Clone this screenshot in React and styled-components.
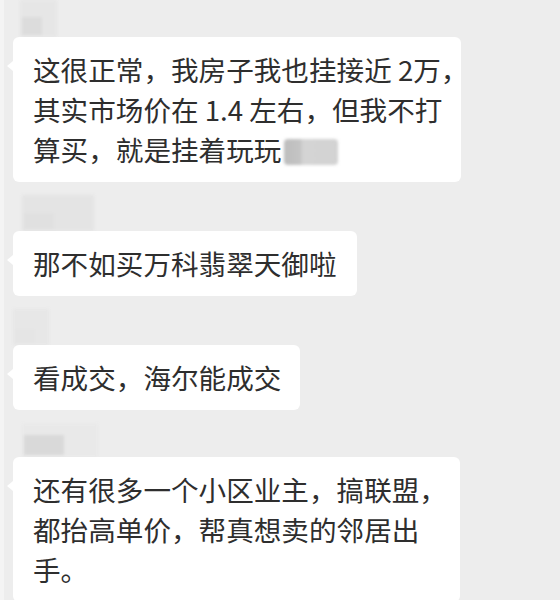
import React from "react";
import styled, { createGlobalStyle } from "styled-components";

const Global = createGlobalStyle`
  html, body { margin: 0; padding: 0; background: #ededed; }
  body { font-family: "Noto Sans CJK SC", "Noto Sans", sans-serif; }
`;

const Page = styled.div`
  width: 560px;
  height: 600px;
  overflow: hidden;
  box-sizing: border-box;
  background: #ededed;
  border-left: 4px solid #f4f4f4;
  padding: 0 0 0 9px;
  display: flex;
  flex-direction: column;
  gap: 12px;
`;

const Message = styled.div`
  display: flex;
  flex-direction: column;
  align-items: flex-start;
`;

const NameRow = styled.div`
  height: ${(p) => p.$h}px;
  display: flex;
  align-items: flex-end;
  padding-left: ${(p) => p.$left}px;
  margin-bottom: ${(p) => p.$gap}px;
`;

const NameBlur = styled.div`
  width: ${(p) => p.$w}px;
  height: ${(p) => p.$h}px;
  background: ${(p) => p.$bg};
  filter: blur(1.5px);
  display: flex;
  align-items: flex-end;
  padding: 0 0 2px 2px;
  box-sizing: border-box;
`;

const NameInner = styled.div`
  width: ${(p) => p.$w}px;
  height: ${(p) => p.$h}px;
  background: ${(p) => p.$bg};
`;

const Bubble = styled.div`
  position: relative;
  width: ${(p) => p.$w}px;
  box-sizing: border-box;
  background: #ffffff;
  border-radius: 6px;
  padding: 12px 16px 13px 20px;
  font-size: 27.6px;
  line-height: 40px;
  color: #2e2e2e;
  white-space: nowrap;

  &::before {
    content: "";
    position: absolute;
    left: -6px;
    top: 24px;
    border-top: 5px solid transparent;
    border-bottom: 5px solid transparent;
    border-right: 6px solid #ffffff;
  }
`;

const EmojiBlur = styled.span`
  display: inline-block;
  width: 54px;
  height: 26px;
  vertical-align: -4px;
  margin-left: 3px;
  border-radius: 4px;
  background: linear-gradient(90deg, #bdbdbd 0%, #c4c4c4 30%, #d4d4d4 35%, #d2d2d2 100%);
  filter: blur(1.5px);
`;

export default function App() {
  return (
    <>
      <Global />
      <Page>
        <Message>
          <NameRow $h={37} $left={7} $gap={0}>
            <NameBlur $w={37} $h={37} $bg="#e6e6e6">
              <NameInner $w={20} $h={18} $bg="#dcdcdc" />
            </NameBlur>
          </NameRow>
          <Bubble $w={448}>
            这很正常，我房子我也挂接近 2万，
            <br />
            其实市场价在 1.4 左右，但我不打
            <br />
            算买，就是挂着玩玩
            <EmojiBlur />
          </Bubble>
        </Message>

        <Message>
          <NameRow $h={37} $left={9} $gap={0}>
            <NameBlur $w={72} $h={36} $bg="#e4e4e4">
              <NameInner $w={30} $h={16} $bg="#e0e0e0" />
            </NameBlur>
          </NameRow>
          <Bubble $w={344}>那不如买万科翡翠天御啦</Bubble>
        </Message>

        <Message>
          <NameRow $h={37} $left={0} $gap={0}>
            <NameBlur $w={36} $h={36} $bg="#e7e7e7">
              <NameInner $w={20} $h={14} $bg="#e5e5e5" />
            </NameBlur>
          </NameRow>
          <Bubble $w={287}>看成交，海尔能成交</Bubble>
        </Message>

        <Message>
          <NameRow $h={35} $left={9} $gap={0}>
            <NameBlur $w={76} $h={33} $bg="#e9e9e9">
              <NameInner $w={40} $h={20} $bg="#d9d9d9" />
            </NameBlur>
          </NameRow>
          <Bubble $w={447}>
            还有很多一个小区业主，搞联盟，
            <br />
            都抬高单价，帮真想卖的邻居出
            <br />
            手。
          </Bubble>
        </Message>
      </Page>
    </>
  );
}
